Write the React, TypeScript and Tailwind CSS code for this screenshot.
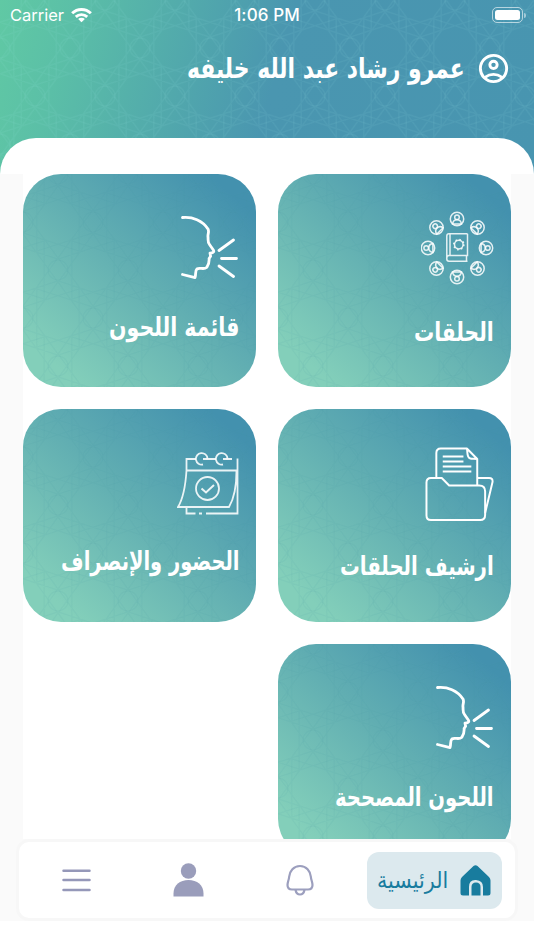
import React from 'react';

const ARABIC = "font-['DejaVu_Sans',sans-serif]";

function starPoints(cx: number, cy: number, r: number, step: number) {
  const pts: string[] = [];
  for (let i = 0; i < 10; i++) {
    const a = (i * step * Math.PI) / 5 + Math.PI / 10;
    pts.push(`${(cx + r * Math.cos(a)).toFixed(1)},${(cy + r * Math.sin(a)).toFixed(1)}`);
  }
  return pts.join(' ');
}

function GirihPattern({ id, stroke, opacity }: { id: string; stroke: string; opacity: number }) {
  const centers = [[0, 0], [70, 0], [0, 96], [70, 96], [35, 48]];
  return (
    <svg className="pointer-events-none absolute inset-0 h-full w-full" aria-hidden="true">
      <defs>
        <pattern id={id} width="70" height="96" patternUnits="userSpaceOnUse">
          <g fill="none" stroke={stroke} strokeOpacity={opacity} strokeWidth="1.3" strokeLinejoin="round">
            {centers.map(([x, y], i) => (
              <polygon key={i} points={starPoints(x, y, 36, 3)} />
            ))}
            <circle cx="35" cy="0" r="10" />
            <circle cx="0" cy="48" r="10" />
            <circle cx="70" cy="48" r="10" />
            <circle cx="35" cy="96" r="10" />
          </g>
        </pattern>
      </defs>
      <rect width="100%" height="100%" fill={`url(#${id})`} />
    </svg>
  );
}

function Member({ angle }: { angle: number }) {
  return (
    <g transform={`rotate(${angle} 37 37) translate(37 8)`}>
      <circle r="6.7" />
      <circle cy="-1.8" r="2.3" />
      <path d="M-4.4 4.9C-4 1.8-2 .8 0 .8s4 1 4.400 4.100z" />
    </g>
  );
}

function CircleIcon() {
  return (
    <svg className="-mr-px ml-px" width="74" height="74" viewBox="1 0 74 74" fill="none" stroke="white" strokeOpacity=".85" strokeWidth="1.5">
      {[0, 45, 90, 135, 180, 225, 270, 315].map((a) => <Member key={a} angle={a} />)}
      <path d="M47.500 22.800H29q-2.200 0-2.200 2.200v23q0 2.200 2.200 2.200h18.500M47.500 22.800v21.700H29q-2.200 0-2.200 2.500M30 23v21.300M46.500 44.500v5.700" />
      <circle cx="38.800" cy="33.600" r="4.300" />
      <circle cx="38.800" cy="33.600" r="5.100" strokeDasharray="1.500 2.500" />
    </svg>
  );
}

function SpeakIcon() {
  return (
    <svg width="58" height="66" viewBox="0.5 0.5 58 66" fill="none" stroke="white" strokeWidth="2.800" strokeLinecap="round" strokeLinejoin="round">
      <path d="M2 3c10-1 20 3 25.500 11.500 1.500 3-.5 5 0 8 .3 3-.5 5 1.500 7.500l4 5.800c1 2-1 2.700-3.500 2.800l.6 3.200-1.500 2.300c.2 3-.5 6.200-2.200 8.700-3.500 3-7-.5-10 1.700-2 2-.7 5-1.900 8.600L2 60" />
      <path d="M38.500 36 53 25.500M41 44h15M38.500 51.500 53 62" />
    </svg>
  );
}

function FolderIcon() {
  return (
    <svg width="69" height="74" viewBox="0 0 70 74" preserveAspectRatio="none" fill="none" stroke="white" strokeWidth="2" strokeLinejoin="round">
      <path d="M11.500 31V6q0-4.500 4.500-4.500h26.500L53 12v26M42.500 1.500c1 4-.5 9 3.500 10 2 .5 4 0 7 .5" />
      <path d="M18 9.500h21M18 14.500h21M18 19.500h29M18 24.500h29" strokeWidth="1.800" />
      <path d="M6 31h11l7.500 7.500H55q6 0 6 6V68q0 5-5 5H6q-4.500 0-4.500-4.500V35.500Q1.500 31 6 31z" />
      <path d="M53 31h12q4 0 3.500 4L61 66" />
    </svg>
  );
}

function CalendarIcon() {
  return (
    <svg width="62" height="63" viewBox="0 0 62 63" fill="none" stroke="white" strokeOpacity=".88" strokeWidth="1.800">
      <path d="M19 7H9.500v11.500C8.500 34 6.500 46 1 55h51c6-10 7.500-24 7.500-36.500h-50M26 7h13M46 7h9M60.500 6.500v55H29M25 61.500h-3M18.500 61.500H9.500V55" />
      <path d="M26 12.500a5.800 5.800 0 1 1 4.500-6M46 12.500a5.800 5.800 0 1 1 4.500-6" />
      <circle cx="30.500" cy="36.500" r="11.500" />
      <path d="m24.500 36.500 4.500 4 8-7.500" strokeWidth="2" />
    </svg>
  );
}

function UserBadge() {
  return (
    <svg width="35" height="35" viewBox="0 0 24 24" fill="white">
      <path fillRule="evenodd" d="M12 2a10 10 0 1 0 0 20 10 10 0 0 0 0-20M7.350 18.500C8.660 17.560 10.260 17 12 17s3.340.560 4.650 1.500A7.950 7.950 0 0 1 12 20a7.950 7.950 0 0 1-4.650-1.500m10.790-1.380A9.940 9.940 0 0 0 12 15a9.940 9.940 0 0 0-6.140 2.120A7.960 7.960 0 0 1 4 12a8 8 0 1 1 14.140 5.120" />
      <path fillRule="evenodd" d="M12 6a3.500 3.500 0 1 0 0 7 3.500 3.500 0 0 0 0-7m0 5a1.500 1.500 0 1 1 0-3 1.500 1.500 0 0 1 0 3" />
    </svg>
  );
}

/* Sets a line of text to a fixed advance width, right edge anchored. */
function Label({ text, width, className }: { text: string; width: number; className: string }) {
  const ref = React.useRef<HTMLSpanElement>(null);
  const [scale, setScale] = React.useState(1);
  React.useLayoutEffect(() => {
    if (ref.current) setScale(width / ref.current.offsetWidth);
  }, [width]);
  return (
    <span className="flex" style={{ width }} dir="rtl">
      <span ref={ref} className={`shrink-0 origin-right whitespace-nowrap ${ARABIC} ${className}`} style={{ transform: `scaleX(${scale})` }}>
        {text}
      </span>
    </span>
  );
}

const cards = [
  { id: 'circles', label: 'الحلقات', width: 80, icon: <CircleIcon />, top: 'pt-[37px]', gap: 'mt-[29px]' },
  { id: 'tunes', label: 'قائمة اللحون', width: 130, icon: <SpeakIcon />, top: 'pt-[41px]', gap: 'mt-[28px]' },
  { id: 'archive', label: 'ارشيف الحلقات', width: 154, icon: <FolderIcon />, top: 'pt-[38px]', gap: 'mt-[27px]' },
  { id: 'attendance', label: 'الحضور والإنصراف', width: 178, icon: <CalendarIcon />, top: 'pt-[43px]', gap: 'mt-[28px]' },
  { id: 'fixed', label: 'اللحون المصححة', width: 159, icon: <SpeakIcon />, top: 'pt-[41px]', gap: 'mt-[28px]' },
];

export default function App() {
  return (
    <div className="flex h-[950px] w-[534px] flex-col overflow-hidden bg-white">
      <header className="relative h-[174px] shrink-0 bg-[linear-gradient(105deg,#60c9a4_0%,#5bbfa7_13%,#4a96b0_51%,#4895b0_100%)]">
        <GirihPattern id="header-girih" stroke="#9be0df" opacity={0.08} />
        <div className="relative flex h-[30px] items-center justify-between pr-[8px] pl-[10px] font-['Inter',sans-serif] text-white">
          <div className="flex w-[180px] items-center gap-[6px] text-[16.5px]">
            <span className="w-[55px] pt-px">Carrier</span>
            <svg width="21" height="16" viewBox="0 0 22 16" fill="none" stroke="white" strokeWidth="3">
              <path d="M1.200 6.200a14 14 0 0 1 19.600 0M5 10a8.700 8.700 0 0 1 12 0" />
              <path d="m7.500 12.200 3.500 3.500 3.500-3.500a5 5 0 0 0-7 0" fill="white" stroke="none" />
            </svg>
          </div>
          <span className="pt-[2px] pr-[2px] text-[17px] font-medium tracking-[0.1px]">1:06 PM</span>
          <div className="flex w-[180px] items-center justify-end gap-[1px]">
            <span className="h-[16px] w-[31px] rounded-[5px] border border-white/60 p-[2px]">
              <span className="block h-full rounded-[2.5px] bg-white" />
            </span>
            <span className="h-[5px] w-[2px] rounded-r bg-white/50" />
          </div>
        </div>
        <div className="relative flex h-[76px] items-center justify-end gap-[11px] pt-px pr-[23px] text-white">
          <Label text="عمرو رشاد عبد الله خليفه" width={278} className="text-[28px] font-bold leading-[40px]" />
          <UserBadge />
        </div>
        <div className="relative mt-[32px] h-[36px] rounded-t-[36px] bg-white" />
      </header>

      <main className="h-[665px] shrink-0 overflow-hidden bg-[#fafafa] px-[23px]">
        <div className="grid h-full auto-rows-[213px] grid-cols-2 content-start gap-x-[22px] gap-y-[22px] bg-white" dir="rtl">
          {cards.map((c) => (
            <section key={c.id} className={`relative flex flex-col items-start overflow-hidden rounded-[38px] bg-[linear-gradient(222deg,#4391ae_10%,#62afb2_49%,#83cfba_88%)] pr-[17px] ${c.top} text-white`}>
              <GirihPattern id={`girih-${c.id}`} stroke="#348f9b" opacity={0.07} />
              <div className="relative">{c.icon}</div>
              <div className={`relative ${c.gap}`}>
                <Label text={c.label} width={c.width} className="text-[26px] font-bold leading-[36px]" />
              </div>
            </section>
          ))}
        </div>
      </main>

      <div className="h-[82px] shrink-0 bg-[#fafafa] px-[16px]">
        <nav className="flex h-[82px] items-center rounded-[13px] border-[3px] border-[#f7f7f7] bg-white" dir="rtl">
          <button className="mr-[13px] flex h-[57px] w-[135px] items-center gap-[12px] rounded-[12px] bg-[#dce9ee] pr-[11px] text-[#187c9e]">
            <svg width="31" height="31" viewBox="0 0 31 31" fill="currentColor">
              <path d="M13.500 1q2-1.300 4 0L29 12q1.500 1.500 1.500 3.500V28q0 2.500-2.500 2.500h-5V22q0-6.500-7-7t-7 7v8.500H3Q.500 30.500.500 28V15.500Q.500 13.500 2 12z" />
              <path d="M11.500 30.500V22q0-4.500 4.500-4.500t4.500 4.500v8.500z" />
            </svg>
            <Label text="الرئيسية" width={71} className="text-[23px] leading-[36px]" />
          </button>
          <svg className="mr-[53px]" width="28" height="32" viewBox="0 0 28 32" fill="none" stroke="#9c9fbe" strokeWidth="2.2">
            <path d="M14 2C7.500 2 3.800 7 3.200 12.500 2.800 16.500 1.500 18 1.500 21c0 3 2 4.500 4.500 4.500h16c2.500 0 4.500-1.500 4.500-4.500 0-3-1.300-4.500-1.700-8.500C24.200 7 20.500 2 14 2M9.500 26c.5 2.500 2 4.500 4.500 4.500s4-2 4.500-4.500" />
          </svg>
          <svg className="mr-[82px]" width="31" height="34" viewBox="0 0 31 34" fill="#9a9dbb">
            <circle cx="15.500" cy="8" r="7.700" />
            <path d="M.500 33.500v-3C.500 22 7 17 15.500 17s15 5 15 13.500v3z" />
          </svg>
          <svg className="mr-[82px]" width="29" height="23" viewBox="0 0 29 23" stroke="#9598b9" strokeWidth="2.500" strokeLinecap="round">
            <path d="M1.500 1.800h26M1.500 11h26M1.500 21h26" />
          </svg>
        </nav>
      </div>
    </div>
  );
}
